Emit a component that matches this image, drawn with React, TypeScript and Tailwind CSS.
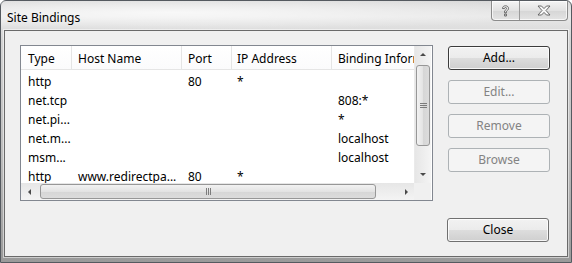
const font = { fontFamily: '"Noto Sans", "Segoe UI", sans-serif' };

type Row = { type: string; host: string; port: string; ip: string; info: string };

const rows: Row[] = [
  { type: "http", host: "", port: "80", ip: "*", info: "" },
  { type: "net.tcp", host: "", port: "", ip: "", info: "808:*" },
  { type: "net.pi...", host: "", port: "", ip: "", info: "*" },
  { type: "net.m...", host: "", port: "", ip: "", info: "localhost" },
  { type: "msm...", host: "", port: "", ip: "", info: "localhost" },
  { type: "http", host: "www.redirectpa...", port: "80", ip: "*", info: "" },
];

function Arrow({ dir }: { dir: "up" | "down" | "left" | "right" }) {
  const pts = {
    up: "1,5 4,2 7,5",
    down: "1,2 4,5 7,2",
    left: "5,1 2,4 5,7",
    right: "3,1 6,4 3,7",
  }[dir];
  return (
    <svg width="8" height="8" viewBox="0 0 8 8">
      <polygon points={pts} fill="#4a4a4a" />
    </svg>
  );
}

function CaptionButtons() {
  return (
    <div className="flex h-[20px] overflow-hidden rounded-b-[4px] border border-t-0 border-[#8b8b8b] bg-[linear-gradient(to_bottom,#f4f4f4,#e2e2e2_50%,#d6d6d6_51%,#e4e4e4)] shadow-[inset_0_0_0_1px_rgba(255,255,255,0.7)]">
      <div className="flex w-[28px] items-center justify-center border-r border-[#9a9a9a]">
        <svg width="9" height="12" viewBox="0 0 9 12">
          <path
            d="M1.5 3.5 C1.5 1.5 3 0.8 4.5 0.8 C6.2 0.8 7.5 1.8 7.5 3.5 C7.5 5 6 5.6 5.4 6.3 L5.4 7.8 L3.6 7.8 L3.6 6 C4 5 5.6 4.6 5.6 3.5 C5.6 2.8 5.1 2.5 4.5 2.5 C3.8 2.5 3.4 3 3.4 3.6 Z M3.6 9 L5.4 9 L5.4 11 L3.6 11 Z"
            fill="#f4f4f4"
            stroke="#5a5a5a"
            strokeWidth="0.9"
          />
        </svg>
      </div>
      <div className="flex w-[47px] items-center justify-center">
        <svg width="14" height="11" viewBox="0 0 14 11">
          <path
            d="M1 1 L4.5 1 L7 3.6 L9.5 1 L13 1 L9 5.5 L13 10 L9.5 10 L7 7.4 L4.5 10 L1 10 L5 5.5 Z"
            fill="#f8f8f8"
            stroke="#5c5c5c"
            strokeWidth="0.9"
            strokeLinejoin="round"
          />
        </svg>
      </div>
    </div>
  );
}

function ListView() {
  const cols = ["w-[51px] pl-[7px]", "w-[110px] pl-[6px]", "w-[50px] pl-[6px]", "w-[100px] pl-[5px]", "w-[100px] pl-[6px]"];
  const heads = ["Type", "Host Name", "Port", "IP Address", "Binding Information"];
  return (
    <div className="mt-[14px] ml-[15px] h-[156px] w-[413px] border border-[#828790] bg-white">
      <div className="flex h-[137px]">
        <div className="w-[393px] overflow-hidden">
          <div className="flex h-[24px] w-[411px] border-b border-[#e5e5e5] bg-[linear-gradient(to_bottom,#ffffff,#fbfbfc)]">
            {heads.map((h, i) => (
              <div
                key={h}
                className={`${cols[i]} flex shrink-0 items-center overflow-hidden whitespace-nowrap pt-[2px] ${i < 4 ? "border-r border-[#e5e5e5]" : ""}`}
              >
                {h}
              </div>
            ))}
          </div>
          <div className="pt-[2px]">
            {rows.map((r, idx) => (
              <div key={idx} className="flex h-[19px] items-center whitespace-nowrap">
                <div className={`${cols[0]} shrink-0`}>{r.type}</div>
                <div className={`${cols[1]} shrink-0`}>{r.host}</div>
                <div className={`${cols[2]} shrink-0`}>{r.port}</div>
                <div className={`${cols[3]} shrink-0`}>{r.ip}</div>
                <div className={`${cols[4]} shrink-0`}>{r.info}</div>
              </div>
            ))}
          </div>
        </div>
        {/* vertical scrollbar */}
        <div className="flex w-[17px] flex-col bg-[linear-gradient(to_right,#e6e6e6,#f4f4f4)] border-l border-[#eaeaea]">
          <div className="flex h-[17px] items-center justify-center">
            <Arrow dir="up" />
          </div>
          <div className="mt-[2px] flex h-[81px] items-center justify-center mx-[1px] rounded-[3px] border border-[#979797] bg-[linear-gradient(to_right,#f2f2f2,#e3e3e3_50%,#d6d6d6_51%,#dcdcdc)]">
            <div className="flex w-[7px] flex-col gap-[1px]">
              <div className="h-px bg-[#7c7c7c]" />
              <div className="h-px bg-[#7c7c7c]" />
              <div className="h-px bg-[#7c7c7c]" />
            </div>
          </div>
          <div className="flex-1" />
          <div className="flex h-[17px] items-center justify-center">
            <Arrow dir="down" />
          </div>
        </div>
      </div>
      {/* horizontal scrollbar */}
      <div className="flex h-[17px]">
        <div className="flex w-[393px] items-center bg-[linear-gradient(to_bottom,#e6e6e6,#f4f4f4)]">
          <div className="flex w-[17px] items-center justify-center">
            <Arrow dir="left" />
          </div>
          <div className="ml-[2px] flex h-[15px] w-[336px] items-center justify-center rounded-[3px] border border-[#979797] bg-[linear-gradient(to_bottom,#f2f2f2,#e3e3e3_50%,#d6d6d6_51%,#dcdcdc)]">
            <div className="flex h-[7px] gap-[1px]">
              <div className="w-px bg-[#7c7c7c]" />
              <div className="w-px bg-[#7c7c7c]" />
              <div className="w-px bg-[#7c7c7c]" />
            </div>
          </div>
          <div className="flex-1" />
          <div className="flex w-[17px] items-center justify-center">
            <Arrow dir="right" />
          </div>
        </div>
        <div className="w-[17px] bg-[#f0f0f0]" />
      </div>
    </div>
  );
}

function Button({ label, disabled, focused }: { label: string; disabled?: boolean; focused?: boolean }) {
  if (disabled) {
    return (
      <div className="flex h-[24px] w-[102px] items-center justify-center rounded-[3px] border border-[#adb2b5] bg-[#f4f4f4] text-[#838383]">
        {label}
      </div>
    );
  }
  return (
    <div
      className={`flex h-[24px] w-[102px] items-center justify-center rounded-[3px] border ${focused ? "border-[#3c3c3c]" : "border-[#707070]"} bg-[linear-gradient(to_bottom,#f2f2f2,#ebebeb_50%,#dddddd_51%,#cfcfcf)] text-black shadow-[inset_0_0_0_1px_rgba(255,255,255,0.8)]`}
    >
      {label}
    </div>
  );
}

export default function App() {
  return (
    <div
      className="flex h-[263px] w-[572px] flex-col rounded-t-[6px] border border-[#555a60] bg-[linear-gradient(to_bottom,#dadada,#e8e8e8_6%,#d4d4d4_15%,#bdbdbd_60%,#9a9a9a)] text-[12px] text-black"
      style={font}
    >
      <div className="flex h-[29px] shrink-0 items-start justify-between bg-[radial-gradient(ellipse_at_30%_40%,rgba(255,255,255,0.75),rgba(255,255,255,0)_70%)]">
        <div className="pt-[8px] pl-[6px] text-[12px]">Site Bindings</div>
        <div className="mr-[3px]">
          <CaptionButtons />
        </div>
      </div>
      <div className="mx-[3px] flex h-[227px] border border-[#6a6a6a] bg-[#f0f0f0] shadow-[0_0_0_1px_rgba(255,255,255,0.5)]">
        <ListView />
        <div className="ml-[15px] mt-[15px] mb-[14px] flex flex-col">
          <div className="flex flex-col gap-[10px]">
            <Button label="Add..." focused />
            <Button label="Edit..." disabled />
            <Button label="Remove" disabled />
            <Button label="Browse" disabled />
          </div>
          <div className="mt-auto -ml-[1px]">
            <Button label="Close" />
          </div>
        </div>
      </div>
    </div>
  );
}
